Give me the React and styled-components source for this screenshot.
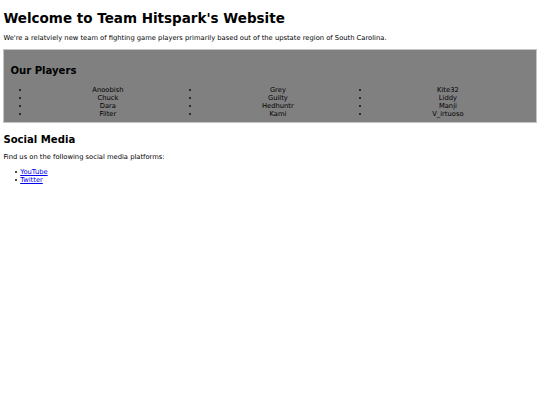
import React from "react";
import styled, { createGlobalStyle } from "styled-components";

const GlobalStyle = createGlobalStyle`
  html, body {
    margin: 0;
    padding: 0;
    background: #ffffff;
  }
  body {
    margin: 3.4px;
    font-family: "DejaVu Sans", Verdana, sans-serif;
    font-size: 6.75px;
    color: #000;
  }
`;

const Title = styled.h1`
  font-size: 13.5px;
  font-weight: bold;
  margin: 7px 0 8px;
`;

const Text = styled.p`
  margin: ${(p) => p.$mt ?? "6.75px"} 0 6.75px;
`;

const Heading = styled.h2`
  font-size: 10.1px;
  font-weight: bold;
  margin: ${(p) => p.$mt ?? "8.4px"} 0 ${(p) => p.$mb ?? "8.4px"};
`;

const PlayersPanel = styled.section`
  background: #808080;
  border: 1px solid #c4c4c4;
  padding: 6px 6px 0;
`;

const Columns = styled.div`
  display: grid;
  grid-template-columns: repeat(3, 167px);
  column-gap: 3px;
  padding-left: 14px;
  margin: 10.4px 0 3.75px;
`;

const List = styled.ul`
  margin: ${(p) => p.$margin ?? "0"};
  padding: ${(p) => p.$pad ?? "0"};
  list-style: none;
  text-align: ${(p) => p.$align ?? "left"};
`;

const Item = styled.li`
  position: relative;

  &::before {
    content: "";
    position: absolute;
    left: -5px;
    top: calc(50% - 1px);
    width: 2px;
    height: 2px;
    border-radius: 50%;
    background: #111;
  }
`;

const Link = styled.a`
  color: #0000ee;
  text-decoration: underline;
`;

const columns = [
  ["Anoobish", "Chuck", "Dara", "Filter"],
  ["Grey", "Guilty", "Hedhuntr", "Kami"],
  ["Kite32", "Liddy", "Manji", "V_irtuoso"],
];

export default function App() {
  return (
    <>
      <GlobalStyle />
      <Title>Welcome to Team Hitspark's Website</Title>
      <Text>
        We're a relatviely new team of fighting game players primarily based out of the
        upstate region of South Carolina.
      </Text>
      <PlayersPanel>
        <Heading>Our Players</Heading>
        <Columns>
          {columns.map((names, i) => (
            <List key={i} $align="center">
              {names.map((n) => (
                <Item key={n}>{n}</Item>
              ))}
            </List>
          ))}
        </Columns>
      </PlayersPanel>
      <Heading $mt="11.4px" $mb="8.4px">Social Media</Heading>
      <Text $mt="8.4px">Find us on the following social media platforms:</Text>
      <List $margin="6.75px 0" $pad="0 0 0 16.8px">
        <Item>
          <Link href="#">YouTube</Link>
        </Item>
        <Item>
          <Link href="#">Twitter</Link>
        </Item>
      </List>
    </>
  );
}
